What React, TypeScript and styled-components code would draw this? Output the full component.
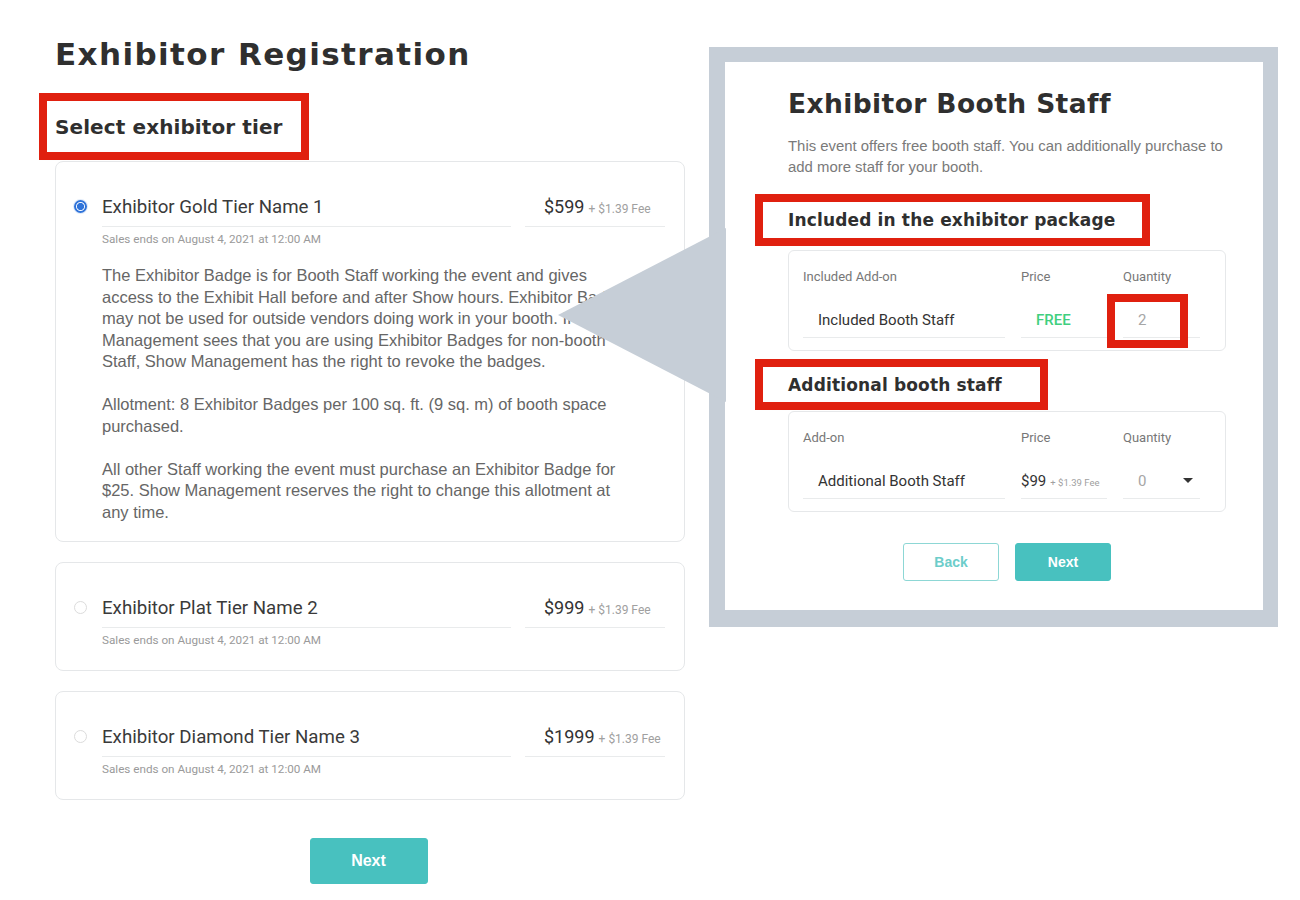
import React from "react";
import styled, { createGlobalStyle } from "styled-components";

const Global = createGlobalStyle`
  html, body { margin: 0; padding: 0; background: #ffffff; }
  body { font-family: Roboto, "Liberation Sans", Arial, sans-serif; color: #333; }
  * { box-sizing: border-box; }
  p { margin: 0; }
`;

const TEAL = "#48c1bf";
const RED = "#e0200f";
const PANEL = "#c6ced7";
const HEAD_FONT = `"DejaVu Sans", Inter, sans-serif`;

const Page = styled.div`
  width: 1300px;
  height: 900px;
  overflow: hidden;
  display: flex;
  align-items: flex-start;
  padding-left: 39px;
`;

const LeftCol = styled.div`
  width: 646px;
  flex-shrink: 0;
  display: flex;
  flex-direction: column;
  align-items: flex-start;
  padding-top: 33px;
`;

const PageTitle = styled.h1`
  margin: 0 0 0 16px;
  font-family: ${HEAD_FONT};
  font-weight: 700;
  font-size: 31px;
  line-height: 42px;
  letter-spacing: 1.4px;
  color: #2f2f2f;
`;

const RedBox = styled.div<{ $w: number; $h: number; $pl: number; $ml?: number; $mt?: number }>`
  flex-shrink: 0;
  display: flex;
  align-items: center;
  width: ${(p) => p.$w}px;
  height: ${(p) => p.$h}px;
  margin-left: ${(p) => p.$ml ?? 0}px;
  margin-top: ${(p) => p.$mt ?? 0}px;
  padding-left: ${(p) => p.$pl}px;
  border: 8px solid ${RED};
  background: #fff;
`;

const SectionTitle = styled.h2<{ $size: number; $ls?: number }>`
  margin: 0;
  font-family: ${HEAD_FONT};
  font-weight: 700;
  font-size: ${(p) => p.$size}px;
  letter-spacing: ${(p) => p.$ls ?? 0}px;
  line-height: 24px;
  color: #2f2f2f;
  white-space: nowrap;
`;

const TierList = styled.div`
  margin: 1px 0 0 16px;
  width: 630px;
  display: flex;
  flex-direction: column;
  gap: 20px;
`;

const TierCard = styled.div`
  display: grid;
  grid-template-columns: 46px 409px 14px 140px;
  align-items: start;
  border: 1px solid #e5e7e9;
  border-radius: 8px;
  padding: 0 0 18px 0;
  background: #fff;
`;

const RadioCell = styled.div`
  height: 65px;
  padding-top: 33px;
  display: flex;
  justify-content: flex-end;
`;

const Radio = styled.span<{ $on: boolean }>`
  margin-top: 5px;
  margin-right: 15px;
  width: 13px;
  height: 13px;
  border-radius: 50%;
  border: ${(p) => (p.$on ? "2px solid #2f73d9" : "1px solid #dcdcdc")};
  background: ${(p) => (p.$on ? "radial-gradient(circle, #2f73d9 0 3.4px, #fff 3.8px)" : "#fff")};
  box-shadow: ${(p) => (p.$on ? "0 0 0 1px rgba(47,115,217,0.15)" : "none")};
`;

const NameCell = styled.div`
  height: 65px;
  padding-top: 33px;
  border-bottom: 1px solid #e9ebec;
  font-size: 18.7px;
  line-height: 24px;
  color: #3a3a3a;
`;

const PriceCell = styled.div`
  grid-column: 4;
  height: 65px;
  padding: 33px 0 0 19px;
  border-bottom: 1px solid #e9ebec;
  display: flex;
  align-items: baseline;
  line-height: 24px;
  white-space: nowrap;
`;

const Price = styled.span<{ $size: number }>`
  font-size: ${(p) => p.$size}px;
  color: #333;
`;

const Fee = styled.span<{ $size: number }>`
  margin-left: 4px;
  font-size: ${(p) => p.$size}px;
  color: #a0a0a0;
`;

const Sales = styled.div<{ $pb: number }>`
  grid-column: 2 / 5;
  margin-top: 5px;
  padding-bottom: ${(p) => p.$pb}px;
  font-size: 11.7px;
  line-height: 14px;
  color: #9a9a9a;
`;

const Description = styled.div`
  grid-column: 2 / 5;
  margin-top: 19px;
  max-width: 535px;
  font-family: "Liberation Sans", Arial, sans-serif;
  font-size: 16.5px;
  line-height: 21.5px;
  color: #666;
  display: flex;
  flex-direction: column;
  gap: 21.5px;
`;

const LeftFooter = styled.div`
  margin-left: 16px;
  width: 630px;
  display: flex;
  justify-content: center;
  padding-top: 38px;
  padding-right: 3px;
`;

const Button = styled.button<{ $w: number; $h: number; $outline?: boolean }>`
  flex-shrink: 0;
  width: ${(p) => p.$w}px;
  height: ${(p) => p.$h}px;
  border-radius: 3px;
  border: 1px solid ${(p) => (p.$outline ? "#8dd7d5" : TEAL)};
  background: ${(p) => (p.$outline ? "#fff" : TEAL)};
  color: ${(p) => (p.$outline ? "#6ccdca" : "#fff")};
  font-family: "Liberation Sans", Arial, sans-serif;
  font-weight: 700;
  font-size: ${(p) => (p.$h > 40 ? 16 : 14)}px;
  padding: 0;
  cursor: pointer;
`;

const Panel = styled.div`
  position: relative;
  flex-shrink: 0;
  margin: 47px 0 0 24px;
  width: 569px;
  height: 580px;
  border-style: solid;
  border-color: ${PANEL};
  border-width: 15px 15px 17px 16px;
  background: #fff;
  padding: 24px 37px 0 63px;
  display: flex;
  flex-direction: column;
  align-items: flex-start;

  &::before {
    content: "";
    position: absolute;
    left: -167px;
    top: 166px;
    width: 168px;
    height: 174px;
    background: ${PANEL};
    clip-path: polygon(0 50%, 100% 0, 100% 100%);
  }
`;

const PanelTitle = styled.h1`
  margin: 0;
  font-family: ${HEAD_FONT};
  font-weight: 700;
  font-size: 26.5px;
  line-height: 36px;
  letter-spacing: 0.4px;
  color: #2f2f2f;
`;

const PanelText = styled.p`
  flex-shrink: 0;
  margin-top: 14px !important;
  width: 440px;
  font-family: "Liberation Sans", Arial, sans-serif;
  font-size: 14.9px;
  line-height: 21px;
  color: #7a7a7a;
`;

const AddonCard = styled.div<{ $mt: number }>`
  flex-shrink: 0;
  margin-top: ${(p) => p.$mt}px;
  width: 438px;
  height: 101px;
  border: 1px solid #e6e8ea;
  border-radius: 6px;
  padding: 18px 0 0 14px;
  display: grid;
  grid-template-columns: 202px 86px 77px;
  column-gap: 16px;
  align-content: start;
`;

const HeadCell = styled.div`
  font-size: 13px;
  line-height: 16px;
  color: #777;
`;

const BodyCell = styled.div<{ $pl?: number }>`
  position: relative;
  margin-top: 17px;
  height: 36px;
  display: flex;
  align-items: center;
  padding-left: ${(p) => p.$pl ?? 15}px;
  border-bottom: 1px solid #e9ebec;
  font-size: 15px;
  color: #333;
  white-space: nowrap;
`;

const PriceLine = styled.span`
  display: flex;
  align-items: baseline;
`;

const Free = styled.span`
  color: #3fcf7e;
  font-weight: 500;
  font-size: 15px;
`;

const Qty = styled.span`
  color: #a6a6a6;
  font-size: 15px;
  flex: 1;
`;

const Caret = styled.span`
  margin-right: 7px;
  width: 0;
  height: 0;
  border-left: 5px solid transparent;
  border-right: 5px solid transparent;
  border-top: 5px solid #333;
`;

const QtyHighlight = styled.span`
  position: absolute;
  left: -16px;
  top: -8px;
  width: 81px;
  height: 54px;
  border: 8px solid ${RED};
`;

const PanelFooter = styled.div`
  flex-shrink: 0;
  width: 438px;
  margin-top: 31px;
  display: flex;
  justify-content: center;
  gap: 16px;
`;

const tiers = [
  { name: "Exhibitor Gold Tier Name 1", price: "$599", on: true, desc: true },
  { name: "Exhibitor Plat Tier Name 2", price: "$999", on: false, desc: false },
  { name: "Exhibitor Diamond Tier Name 3", price: "$1999", on: false, desc: false },
];

export default function App() {
  return (
    <>
      <Global />
      <Page>
        <LeftCol>
          <PageTitle>Exhibitor Registration</PageTitle>
          <RedBox $w={270} $h={67} $pl={8} $mt={18}>
            <SectionTitle $size={20} $ls={0.1}>Select exhibitor tier</SectionTitle>
          </RedBox>
          <TierList>
            {tiers.map((t) => (
              <TierCard key={t.name}>
                <RadioCell>
                  <Radio $on={t.on} />
                </RadioCell>
                <NameCell>{t.name}</NameCell>
                <PriceCell>
                  <Price $size={18}>{t.price}</Price>
                  <Fee $size={12}>+ $1.39 Fee</Fee>
                </PriceCell>
                <Sales $pb={t.desc ? 0 : 5}>Sales ends on August 4, 2021 at 12:00 AM</Sales>
                {t.desc && (
                  <Description>
                    <p>
                      The Exhibitor Badge is for Booth Staff working the event and gives access to the
                      Exhibit Hall before and after Show hours. Exhibitor Badges may not be used for
                      outside vendors doing work in your booth. If Show Management sees that you are
                      using Exhibitor Badges for non-booth Staff, Show Management has the right to
                      revoke the badges.
                    </p>
                    <p>Allotment: 8 Exhibitor Badges per 100 sq. ft. (9 sq. m) of booth space purchased.</p>
                    <p>
                      All other Staff working the event must purchase an Exhibitor Badge for $25. Show
                      Management reserves the right to change this allotment at any time.
                    </p>
                  </Description>
                )}
              </TierCard>
            ))}
          </TierList>
          <LeftFooter>
            <Button $w={118} $h={46}>Next</Button>
          </LeftFooter>
        </LeftCol>

        <Panel>
          <PanelTitle>Exhibitor Booth Staff</PanelTitle>
          <PanelText>
            This event offers free booth staff. You can additionally purchase to add more staff for
            your booth.
          </PanelText>

          <RedBox $w={395} $h={52} $pl={25} $ml={-33} $mt={16}>
            <SectionTitle $size={17} $ls={0.15}>Included in the exhibitor package</SectionTitle>
          </RedBox>
          <AddonCard $mt={4}>
            <HeadCell>Included Add-on</HeadCell>
            <HeadCell>Price</HeadCell>
            <HeadCell>Quantity</HeadCell>
            <BodyCell>Included Booth Staff</BodyCell>
            <BodyCell>
              <Free>FREE</Free>
            </BodyCell>
            <BodyCell>
              <Qty>2</Qty>
              <QtyHighlight />
            </BodyCell>
          </AddonCard>

          <RedBox $w={293} $h={51} $pl={25} $ml={-33} $mt={8}>
            <SectionTitle $size={17} $ls={0.15}>Additional booth staff</SectionTitle>
          </RedBox>
          <AddonCard $mt={1}>
            <HeadCell>Add-on</HeadCell>
            <HeadCell>Price</HeadCell>
            <HeadCell>Quantity</HeadCell>
            <BodyCell>Additional Booth Staff</BodyCell>
            <BodyCell $pl={0}>
              <PriceLine>
                <Price $size={15}>$99</Price>
                <Fee $size={9.5}>+ $1.39 Fee</Fee>
              </PriceLine>
            </BodyCell>
            <BodyCell>
              <Qty>0</Qty>
              <Caret />
            </BodyCell>
          </AddonCard>

          <PanelFooter>
            <Button $w={96} $h={38} $outline>
              Back
            </Button>
            <Button $w={96} $h={38}>Next</Button>
          </PanelFooter>
        </Panel>
      </Page>
    </>
  );
}
